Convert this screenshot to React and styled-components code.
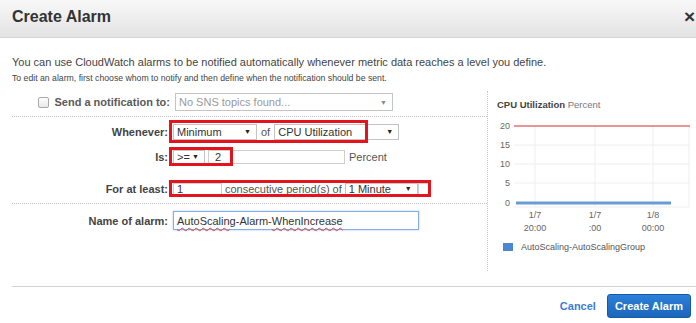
import React from 'react';
import styled, { createGlobalStyle } from 'styled-components';

const Global = createGlobalStyle`
  html, body { margin: 0; padding: 0; background: #fff; }
  body {
    font-family: "Liberation Sans", Arial, sans-serif;
    color: #444;
    width: 696px;
    height: 323px;
    overflow: hidden;
  }
`;

const Dialog = styled.div`
  width: 696px;
  height: 323px;
  overflow: hidden;
  background: #fff;
`;

const Header = styled.div`
  height: 38px;
  box-sizing: border-box;
  display: flex;
  align-items: center;
  justify-content: space-between;
  padding: 0 1px 4px 12px;
  background: linear-gradient(#f8f8f8, #e3e3e3);
  border-bottom: 1px solid #d4d4d4;
`;

const Title = styled.div`
  font-size: 16px;
  font-weight: bold;
  color: #333;
`;

const Close = styled.div`
  font-size: 19px;
  font-weight: bold;
  color: #333;
  line-height: 1;
`;

const Intro = styled.div`
  padding: 0 12px;
`;

const Lead = styled.div`
  margin-top: 17px;
  font-size: 11px;
  line-height: 14px;
  color: #444;
`;

const Hint = styled.div`
  margin-top: 4px;
  font-size: 8.7px;
  line-height: 10px;
  color: #444;
`;

const Main = styled.div`
  display: flex;
  margin-left: 12px;
  height: 203px;
`;

const FormCol = styled.div`
  width: 475px;
  display: flex;
  flex-direction: column;
`;

const Row = styled.div`
  position: relative;
  display: flex;
  align-items: center;
  height: ${p => p.$h}px;
  margin-top: ${p => p.$mt}px;
`;

const Label = styled.div`
  width: ${p => p.$w}px;
  margin-right: 5px;
  display: flex;
  align-items: center;
  justify-content: flex-end;
  font-size: 11px;
  font-weight: bold;
  color: ${p => (p.$muted ? '#5a5a5a' : '#444')};
  white-space: nowrap;
`;

const Check = styled.span`
  width: 11px;
  height: 11px;
  box-sizing: border-box;
  border: 1px solid #a9a9a9;
  border-radius: 2px;
  background: linear-gradient(#fdfdfd, #e9e9e9);
  margin-right: 6px;
`;

const Select = styled.div`
  display: inline-flex;
  align-items: center;
  justify-content: space-between;
  box-sizing: border-box;
  width: ${p => p.$w}px;
  height: ${p => p.$h}px;
  padding: 0 5px 0 3px;
  border: 1px solid #c4c4c4;
  background: #fff;
  font-size: 11px;
  color: ${p => (p.$placeholder ? '#9a9a9a' : '#333')};
  white-space: nowrap;
  flex-shrink: 0;
`;

const Arrow = styled.span`
  font-size: 7px;
  color: ${p => (p.$light ? '#888' : '#222')};
`;

const Input = styled.div`
  display: inline-flex;
  align-items: center;
  box-sizing: border-box;
  width: ${p => p.$w}px;
  height: ${p => p.$h}px;
  padding: 0 ${p => p.$pl || 3}px;
  margin-left: ${p => p.$ml || 0}px;
  border: 1px solid ${p => (p.$focus ? '#86aee6' : '#cfcfcf')};
  box-shadow: ${p => (p.$focus ? '0 0 2px #a9c8f0' : 'none')};
  background: #fff;
  font-size: 11px;
  color: #333;
  white-space: nowrap;
  flex-shrink: 0;
`;

const Word = styled.span`
  font-size: 11px;
  color: #555;
  margin: 0 ${p => p.$mx || 4}px;
  white-space: nowrap;
`;

const Misspelled = styled.span`
  text-decoration: underline wavy #e0413a;
  text-decoration-thickness: 1px;
  text-underline-offset: 2px;
`;

const Mark = styled.div`
  position: absolute;
  left: 157px;
  top: 0;
  bottom: 0;
  width: ${p => p.$w}px;
  box-sizing: border-box;
  border: 3px solid #e2141d;
  pointer-events: none;
`;

const Sep = styled.div`
  margin-top: ${p => p.$mt}px;
  border-top: 1px dotted #c4c4c4;
  width: 475px;
`;

const ChartPanel = styled.div`
  margin-top: 8px;
  height: 180px;
  border-left: 1px dotted #c4c4c4;
  padding-left: 9px;
  flex: 1;
`;

const ChartTitle = styled.div`
  margin-top: 8px;
  line-height: 12px;
  font-size: 9.5px;
  color: #777;
  b { color: #444; }
`;

const ChartSvg = styled.svg`
  display: block;
  margin-top: 5px;
`;

const Legend = styled.div`
  display: flex;
  align-items: center;
  margin-top: 1px;
  padding-left: 6px;
  line-height: 12px;
  font-size: 9px;
  color: #555;
`;

const Swatch = styled.span`
  width: 10px;
  height: 8px;
  background: #4a88d2;
  margin-right: 8px;
`;

const Footer = styled.div`
  margin-left: 12px;
  border-top: 1px solid #d2d2d2;
  display: flex;
  justify-content: flex-end;
  align-items: center;
  padding: 7px 5px 0 0;
  gap: 11px;
`;

const LinkBtn = styled.span`
  font-size: 11px;
  font-weight: bold;
  color: #3b7dd3;
`;

const PrimaryBtn = styled.div`
  height: 24px;
  box-sizing: border-box;
  padding: 0 7px;
  display: flex;
  align-items: center;
  border: 1px solid #1659a5;
  border-radius: 3px;
  background: linear-gradient(#2d7fd8, #1a66bc);
  color: #fff;
  font-size: 11px;
  font-weight: bold;
`;

const grid = '#eeeeee';

function Chart() {
  const yTicks = [
    ['20', 10],
    ['15', 29],
    ['10', 48],
    ['5', 67],
    ['0', 87],
  ];
  const xTicks = [
    [38, '1/7', '20:00'],
    [98, '1/7', ':00'],
    [156, '1/8', '00:00'],
  ];
  return (
    <ChartSvg width="196" height="124" viewBox="0 0 196 124">
      {[29, 48, 67].map(y => (
        <line key={y} x1="17" x2="192" y1={y} y2={y} stroke={grid} strokeWidth="1" />
      ))}
      {[38, 98, 156, 192].map(x => (
        <line key={x} x1={x} x2={x} y1="10" y2="91" stroke={grid} strokeWidth="1" />
      ))}
      <line x1="17" x2="192" y1="91" y2="91" stroke={grid} strokeWidth="1" />
      <line x1="17" x2="193" y1="10" y2="10" stroke="#e37171" strokeWidth="1.5" />
      <line x1="19" x2="174" y1="87" y2="87" stroke="#6b9bd6" strokeWidth="3" />
      {yTicks.map(([t, y]) => (
        <text key={t} x="13" y={y + 3} textAnchor="end" fontSize="9" fill="#666" fontFamily="Liberation Sans, Arial, sans-serif">
          {t}
        </text>
      ))}
      {xTicks.map(([x, a, b]) => (
        <g key={x}>
          <text x={x} y="102" textAnchor="middle" fontSize="9" fill="#666" fontFamily="Liberation Sans, Arial, sans-serif">{a}</text>
          <text x={x} y="115" textAnchor="middle" fontSize="9" fill="#666" fontFamily="Liberation Sans, Arial, sans-serif">{b}</text>
        </g>
      ))}
    </ChartSvg>
  );
}

export default function App() {
  return (
    <>
      <Global />
      <Dialog>
        <Header>
          <Title>Create Alarm</Title>
          <Close>×</Close>
        </Header>
        <Intro>
          <Lead>You can use CloudWatch alarms to be notified automatically whenever metric data reaches a level you define.</Lead>
          <Hint>To edit an alarm, first choose whom to notify and then define when the notification should be sent.</Hint>
        </Intro>
        <Main>
          <FormCol>
            <Row $h={22} $mt={8}>
              <Label $w={158} $muted>
                <Check />
                Send a notification to:
              </Label>
              <Select $w={218} $h={18} $placeholder>
                No SNS topics found...
                <Arrow $light>▼</Arrow>
              </Select>
            </Row>
            <Sep $mt={3} />
            <Row $h={23} $mt={3}>
              <Label $w={156}>Whenever:</Label>
              <Select $w={84} $h={16}>
                Minimum
                <Arrow>▼</Arrow>
              </Select>
              <Word>of</Word>
              <Select $w={125} $h={16}>
                CPU Utilization
                <Arrow>▼</Arrow>
              </Select>
              <Mark $w={199} />
            </Row>
            <Row $h={19} $mt={4}>
              <Label $w={156}>Is:</Label>
              <Select $w={32} $h={14}>
                &gt;=
                <Arrow>▼</Arrow>
              </Select>
              <Input $w={137} $h={14} $ml={3} $pl={6}>2</Input>
              <Word>Percent</Word>
              <Mark $w={64} />
            </Row>
            <Row $h={17} $mt={14}>
              <Label $w={156}>For at least:</Label>
              <Input $w={49} $h={12}>1</Input>
              <Word $mx={3}>consecutive period(s) of</Word>
              <Select $w={73} $h={12}>
                1 Minute
                <Arrow>▼</Arrow>
              </Select>
              <Input $w={13} $h={12} />
              <Mark $w={262} />
            </Row>
            <Sep $mt={6} />
            <Row $h={19} $mt={7}>
              <Label $w={156}>Name of alarm:</Label>
              <Input $w={246} $h={19} $focus>
                <Misspelled>AutoScaling</Misspelled>-Alarm-<Misspelled>WhenIncrease</Misspelled>
              </Input>
            </Row>
          </FormCol>
          <ChartPanel>
            <ChartTitle>
              <b>CPU Utilization</b> Percent
            </ChartTitle>
            <Chart />
            <Legend>
              <Swatch />
              AutoScaling-AutoScalingGroup
            </Legend>
          </ChartPanel>
        </Main>
        <Footer>
          <LinkBtn>Cancel</LinkBtn>
          <PrimaryBtn>Create Alarm</PrimaryBtn>
        </Footer>
      </Dialog>
    </>
  );
}
